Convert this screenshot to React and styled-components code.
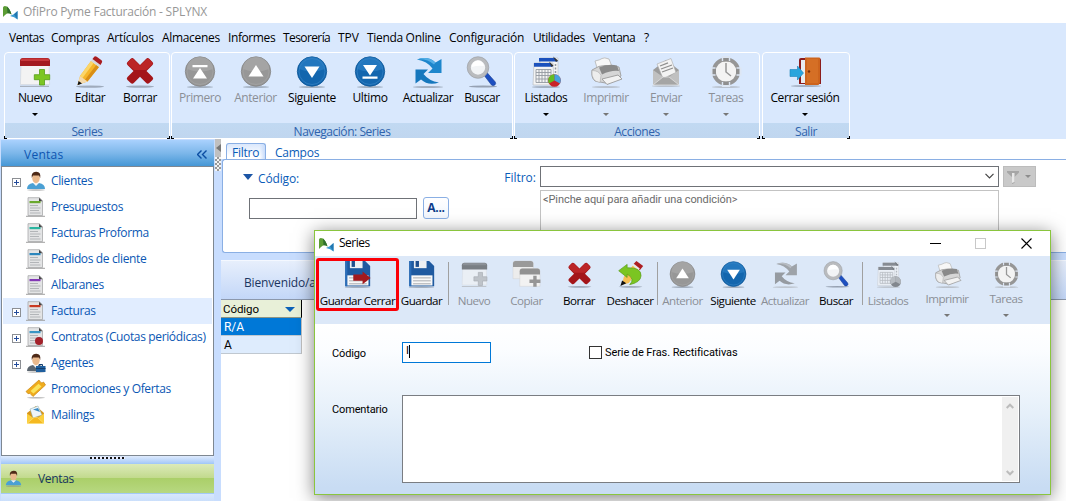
import React from "react";
import styled, { createGlobalStyle, css } from "styled-components";

const Global = createGlobalStyle`
  * { box-sizing: border-box; }
  html, body { margin: 0; padding: 0; overflow: hidden; }
  body { font: 12px/16px "Open Sans", "Noto Sans", sans-serif; letter-spacing: -0.32px; color: #000; background: #fff; }
`;

const Window = styled.div`
  position: relative; width: 1066px; height: 501px; overflow: hidden;
  display: flex; flex-direction: column; background: #fff;
`;
const TitleBar = styled.header`
  height: 23px; flex: none; display: flex; align-items: center; gap: 5px; padding-left: 2px;
  color: #979797; background: #fff; white-space: nowrap; letter-spacing: -0.22px;
  & > span { margin-top: 1px; }
`;
const MenuBar = styled.nav`
  height: 29px; flex: none; display: flex; align-items: center; padding: 1px 0 0 9px; background: #d9e8fd;
`;
const MenuItem = styled.span`width: ${p => p.$w}px; white-space: nowrap; letter-spacing: ${p => p.$ls}px;`;
const Ribbon = styled.div`height: 87px; flex: none; display: flex; padding-left: 4px; background: #d9e8fd;`;
const Group = styled.section`
  position: relative; width: ${p => p.$w}px; height: 87px; margin-right: ${p => p.$gap}px;
  display: flex; flex-direction: column; border: 1px solid #fff; border-radius: 4px 4px 0 0;
  &::before, &::after { content: ""; position: absolute; bottom: -1px; width: 2px; height: 2px; border-bottom: 1px solid #000; }
  &::before { left: -1px; border-left: 1px solid #000; }
  &::after { right: -1px; border-right: 1px solid #000; }
`;
const GroupButtons = styled.div`display: flex; flex: 1; padding-left: ${p => p.$pad || 0}px;`;
const GroupCaption = styled.div`
  height: 15px; background: linear-gradient(#c1d9f2, #c0d6ef); color: #2f63ad; text-align: center; line-height: 17px;
  letter-spacing: -0.45px;
`;
const ToolButton = styled.div`
  width: ${p => p.$w}px; flex: none; display: flex; flex-direction: column; align-items: center;
  color: ${p => (p.$off ? "#8b8f96" : "#000")}; padding-top: 3px; white-space: nowrap;
  & > span { margin-top: 2px; letter-spacing: -0.42px; }
`;
const Caret = styled.i`
  margin-top: 7px; border: 3px solid transparent; border-bottom: 0;
  border-top-color: ${p => (p.$off ? "#777" : "#000")}; width: 6px; height: 3px;
`;
const Art = styled.svg`
  width: ${p => p.$s || 32}px; height: ${p => p.$s || 32}px; display: block; flex: none; overflow: visible;
  ${p => p.$gray && css`filter: grayscale(1) opacity(0.6);`}
`;

const Body = styled.div`flex: 1; display: flex; min-height: 0;`;
const Sidebar = styled.aside`width: 215px; display: flex; flex-direction: column; padding: 1px 1px 0 1px; background: #c8ddfe;`;
const SideHeader = styled.div`
  height: 26px; flex: none; display: flex; align-items: center; justify-content: space-between; padding: 3px 7px 0 23px;
  background: linear-gradient(#a9d1fd, #7db7ea 50%, #4597d5); color: #0d55b1; letter-spacing: 0.25px;
`;
const Tree = styled.ul`
  list-style: none; margin: 0; padding: 1px 1px; height: 290px; flex: none; background: #fff; border: 1px solid #7e8791;
`;
const TreeRow = styled.li`
  height: 26px; display: flex; align-items: center; color: #0a57b4; white-space: nowrap;
  background: ${p => (p.$sel ? "#e1edff" : "#fff")};
  letter-spacing: -0.36px;
  & > svg { margin: 0 5px 0 5px; }
  & > span:last-child { margin-top: -1px; }
`;
const Expander = styled.span`
  width: 9px; height: 9px; flex: none; margin: 3px 0 0 9px; border: 1px solid ${p => (p.$on ? "#8c8f94" : "transparent")};
  background: ${p => p.$on ? "linear-gradient(#234b9b,#234b9b) center/5px 1px no-repeat, linear-gradient(#234b9b,#234b9b) center/1px 5px no-repeat, #fff" : "none"};
`;
const Grip = styled.div`
  height: 7px; flex: none; display: flex; justify-content: center; align-items: center;
  background: linear-gradient(#dfebfd, #a9cbf8);
  &::after { content: ""; width: 35px; height: 2px; margin-top: -3px; background: repeating-linear-gradient(90deg, #111 0 2px, #eef 2px 4px); }
`;
const NavButton = styled.div`
  height: ${p => p.$h}px; flex: none; display: flex; align-items: center; gap: 16px; padding-left: 4px; overflow: hidden;
  background: ${p => (p.$active ? "linear-gradient(#dceab9, #c2da8d 48%, #abcf69 50%, #b7d881)" : "linear-gradient(#d7e7fd,#c3dafb)")};
  color: #17365f; border-top: 1px solid #a3c9f7;
`;

const Splitter = styled.div`width: 6px; background: #c8ddfe;`;
const SplitHandle = styled.div`height: 18px; background: #c0c0c0; padding: 5px 0 0 1px;`;
const SplitDots = styled.div`
  height: 14px; background: repeating-conic-gradient(#999 0 25%, #f4f4f4 0 50%) 0 0/4px 4px;
`;
const Main = styled.main`flex: 1; display: flex; flex-direction: column; min-width: 0; background: #c8ddfe;`;
const Tabs = styled.div`height: 20px; flex: none; display: flex; align-items: flex-end; padding-left: 5px; background: #fff;`;
const Tab = styled.div`
  height: 16px; padding: 0 ${p => (p.$on ? 5 : 9)}px; color: #0a5cb8; letter-spacing: -0.25px;
  border: ${p => (p.$on ? "1px solid #8aafe4" : "0")}; border-bottom: 0; border-radius: 3px 3px 0 0; line-height: ${p => (p.$on ? 17 : 19)}px;
  width: ${p => p.$w}px;
  ${p => p.$on && css`background: linear-gradient(90deg, #fff0 85%, #c8dcfb), linear-gradient(#dbe8fc, #fff 80%);`}
`;
const FilterPanel = styled.div`
  height: 94px; flex: none; display: flex; background: #fff; border: 1px solid #8aafe4; border-right: 0; margin-left: 1px;
  border-radius: 3px 0 0 3px; padding-left: 20px; color: #0a5cb8;
`;
const FieldColumn = styled.div`width: 255px; display: flex; flex-direction: column;`;
const FieldTitle = styled.div`
  height: 16px; margin-top: 11px; display: flex; align-items: center; gap: 5px; letter-spacing: -0.15px;
  &::before { content: ""; border: 5.5px solid transparent; border-top: 6px solid #1c55a5; border-bottom: 0; margin-top: -4px; }
`;
const FieldRow = styled.div`display: flex; gap: 6px; margin: 10px 0 0 6px; align-items: center;`;
const Box = styled.div`
  width: ${p => p.$w}px; height: ${p => p.$h}px; background: #fff; border: 1px solid ${p => p.$c || "#6f7277"};
`;
const AlphaButton = styled.div`
  width: 26px; height: 22px; border: 1px solid #8aafe4; border-radius: 3px; text-align: center; font-weight: 700; color: #0d3b8a;
  line-height: 19px; background: linear-gradient(#fff, #f1f6fe);
`;
const FilterLabel = styled.div`width: 42px; padding: 10px 4px 0 0; text-align: right; letter-spacing: 0; white-space: nowrap;`;
const FilterColumn = styled.div`display: flex; flex-direction: column; gap: 3px; padding-top: 6px;`;
const Combo = styled(Box)`display: flex; align-items: center; justify-content: flex-end; padding-right: 4px;`;
const Small = styled.span`
  font: ${p => p.$size || 11}px/14px "Roboto", "Liberation Sans", sans-serif; letter-spacing: -0.08px;
  color: ${p => p.$c || "#000"}; white-space: nowrap;
`;
const Conditions = styled(Box)`padding: 0 2px;`;
const FunnelButton = styled.div`
  width: 33px; height: 21px; margin: 6px 0 0 4px; background: #c9c9c9; border: 1px solid #bcbcbc;
  display: flex; align-items: center; gap: 6px; padding-left: 3px;
`;
const Band = styled.div`
  height: 40px; flex: none; margin-top: 7px; background: linear-gradient(#e7effc, #c3d7f8); border-top: 1px solid #f4f8ff; border-bottom: 1px solid #8c98ac;
  padding: 14px 0 0 23px; color: #1c3560; letter-spacing: -0.15px;
`;
const Grid = styled.div`flex: 1; background: #fff;`;
const GridHead = styled.div`
  width: 81px; height: 18px; display: flex; align-items: center; justify-content: space-between; padding: 1px 6px 0 2px;
  background: #e8f0d8; border-right: 1px solid #000; border-bottom: 1px solid #8d9484;
  &::after { content: ""; border: 5px solid transparent; border-top: 5px solid #0c62b8; border-bottom: 0; }
`;
const GridRow = styled.div`
  width: 81px; height: 18px; padding: 1px 3px; display: flex; align-items: center;
  background: ${p => (p.$sel ? "#0078d7" : "#deecfd")}; border-right: 1px solid #c0c0c0; border-bottom: 1px solid #c0c8d0;
`;

const Dialog = styled.section`
  position: absolute; left: 314px; top: 230px; width: 737px; height: 265px; display: flex; flex-direction: column;
  border: 1px solid #8ac53e; background: #fff; box-shadow: 0 3px 17px rgba(0,0,0,.5);
`;
const DialogTitle = styled.div`
  height: 25px; flex: none; display: flex; align-items: center; padding-left: 3px;
  & > span { flex: 1; margin: -1px 0 0 5px; letter-spacing: -0.5px; }
`;
const WinButton = styled.svg`
  width: 11px; height: 11px; flex: none; margin-right: ${p => p.$mr}px; fill: none; shape-rendering: ${p => (p.$crisp ? "crispEdges" : "auto")};
`;
const DialogBar = styled.div`position: relative; height: 68px; flex: none; display: flex; background: #dce8f8;`;
const Divider = styled.div`width: 1px; height: 43px; margin: 6px 0 0 ${p => p.$ml}px; background: #a0a0a0; flex: none;`;
const DlgButton = styled(ToolButton)`
  padding-top: 5px;
  & > span { margin-top: ${p => (p.$menu ? 3 : 5)}px; letter-spacing: -0.5px; font-size: 11.6px; }
`;
const Highlight = styled.div`
  position: absolute; left: 1px; top: 2px; width: 83px; height: 53px; border: 3px solid #fb0007; border-radius: 3px;
`;
const Form = styled.div`
  flex: 1; min-height: 0; display: flex; flex-direction: column; padding: 18px 0 0 17px;
  background: linear-gradient(#fff 0%, #fbfdff 15%, #e6f0fa 52%, #c8dcf3 96%);
`;
const FormRow = styled.div`display: flex; align-items: center; height: 21px;`;
const MemoRow = styled.div`display: flex; align-items: flex-start; margin-top: 32px;`;
const FormLabel = styled(Small)`width: 70px; letter-spacing: -0.15px; ${p => p.$top ? css`margin-top: 8px;` : css`margin-top: 2px;`}`;
const CodeInput = styled.div`
  width: 89px; height: 21px; border: 1px solid #0078d7; background: #fff; padding: 1px 3px; display: flex;
  &::after { content: ""; width: 1px; height: 13px; margin-top: 1px; background: #000; }
`;
const Check = styled.div`width: 13px; height: 13px; border: 1px solid #333; background: #fff; margin: 0 3px 0 98px;`;
const Memo = styled.div`
  width: 618px; height: 88px; border: 1px solid #7a7d82; background: #fff; display: flex; justify-content: flex-end; padding: 1px;
`;
const Scroll = styled.div`
  width: 16px; background: #f0f0f0; display: flex; flex-direction: column; justify-content: space-between; align-items: center; padding: 6px 0 5px;
`;

const Shade = () => <ellipse cx="16" cy="30.6" rx="14" ry="1.1" fill="#7f8a99" opacity=".65" />;

const art = {
  nuevo: (
    <>
      <path d="M1 29.8h29v1H1z" fill="#9ba3ad" />
      <path d="M2 9h28l.6 19.5H1.4z" fill="#f3f3f3" stroke="#d0d3d8" strokeWidth=".6" />
      <path d="M1 5q0-3 3-3h24q3 0 3 3v5H1z" fill="#a31a1e" />
      <path d="M2 4q0-1.5 2-1.5h24q2 0 2 1.5v1H2z" fill="#c7373a" />
      <path d="M20.500 13.500h5v5.200h5.200v5h-5.200V29h-5v-5.300h-5.200v-5h5.200z" fill="#7cc623" stroke="#569d16" strokeWidth=".8" />
    </>
  ),
  editar: (
    <>
      <Shade />
      <path d="M3.500 29l2.500-9L17 5l8 6L13.500 25.500z" fill="#f5b52a" />
      <path d="M17 5l2.700 2L8.500 22 6 20z" fill="#fbd568" /><path d="M22.300 9l2.700 2-11.500 14.500-2.600-1.800z" fill="#d98e16" />
      <path d="M6 20l7.500 5.500L3.500 29z" fill="#f2d9ae" /><path d="M4.600 25l3.400 2.400-4.500 1.800z" fill="#111" />
      <path d="M17 5l1.500-2 8 6-1.500 2z" fill="#d6d8da" /><path d="M18.500 3l1.700-2.300q1-1 2.500 0l4.800 3.600q1.200 1 .4 2.200L26.500 9z" fill="#a81c20" />
    </>
  ),
  borrar: (
    <>
      <Shade />
      <path d="M7 2.500q1.500-1 3 .5l6 6 6-6q1.500-1.500 3-.5l3.500 3.500q1.500 1.500 0 3L22.500 15l6 6q1.500 1.500 0 3L25 27.300q-1.500 1-3-.5l-6-6-6 6q-1.500 1.500-3 .5L3.500 24q-1.500-1.500 0-3l6-6-6-6q-1.500-1.500 0-3z" fill="#a41519" />
      <path d="M7 3.200q1.500-1 3 .5l6 6 6-6q1.500-1.500 3-.5l3 3q1 1.500 0 2.500L22 14H10L4 8.500q-1-1.500 0-2.500z" fill="#bb2527" />
    </>
  ),
  arrow: kind => gray => (
    <>
      <ellipse cx="16" cy="31" rx="13" ry="1" fill="#7f8a99" opacity=".6" />
      <circle cx="16" cy="15.500" r="14.700" fill={gray ? "#979797" : "#1366ae"} stroke={gray ? "#858585" : "#0d5595"} strokeWidth=".8" />
      <path d="M3 13a13 12 0 0 1 26 0q-13 5-26 0z" fill={gray ? "#a9a9a9" : "#2b7fc4"} opacity=".7" />
      <circle cx="16" cy="15.500" r="13" fill="none" stroke={gray ? "#a5a5a5" : "#3583c4"} strokeWidth=".7" />
      {kind === "down" && <path d="M8.500 10.500h15L16 22z" fill="#fff" />}
      {kind === "up" && <path d="M8.500 20.500h15L16 9z" fill="#fff" />}
      {kind === "first" && <path d="M8.500 9h15v2.300h-15zM9 22.500h14L16 12z" fill="#fff" />}
      {kind === "last" && <path d="M8.500 20.500h15v2.300h-15zM9 9h14l-7 10.500z" fill="#fff" />}
    </>
  ),
  actualizar: (
    <>
      <ellipse cx="16" cy="31" rx="15" ry="1" fill="#7f8a99" opacity=".6" />
      <path d="M5 3.500Q16-.5 23.500 6.500L29.500 3v14H16l4.500-4.500Q15 5 5 3.500z" fill="#1d86cc" />
      <path d="M27 26.500Q16 30 9 23.500L3.500 27.500V13.500H16l-4.500 4.500Q17 25 27 26.500z" fill="#1577bd" />
      <path d="M5 3.500Q16-.5 23.500 6.500l-1.500 2Q15 2.500 5 3.500z" fill="#54aee6" />
    </>
  ),
  buscar: (
    <>
      <ellipse cx="17" cy="30.500" rx="14" ry="1" fill="#7f8a99" opacity=".75" />
      <path d="M17.500 18.500l3-2.500 8.800 10q1 1.800-.5 3t-3.300 0z" fill="#1d4fc0" stroke="#153a92" strokeWidth=".6" />
      <circle cx="12" cy="11.500" r="9" fill="#f2f4f6" stroke="#b9bbbe" strokeWidth="3.600" />
      <circle cx="12" cy="11.500" r="10.800" fill="none" stroke="#96999e" strokeWidth=".6" />
      <path d="M6 11a6 6 0 0 1 12-1q-6-1-12 1z" fill="#fff" />
    </>
  ),
  listados: (
    <>
      <ellipse cx="16" cy="31" rx="14" ry="1" fill="#7f8a99" opacity=".6" />
      <path d="M10 2h18v25H10z" fill="#f5f5f5" stroke="#b9bcc0" strokeWidth=".6" /><path d="M9 2h16l3 3.500H9z" fill="#1b51bd" />
      <path d="M23 .5l5 4-2 1.500z" fill="#333" /><path d="M25.500 8v10" stroke="#949aa2" strokeWidth="1.500" strokeDasharray="2 1.500" />
      <path d="M4 7h19l1 22H3z" fill="#f4f4f4" stroke="#b4b7bb" strokeWidth=".6" /><path d="M4 7h16l3 3.800H4z" fill="#1b51bd" /><path d="M19 5.500l4.500 4-2 1.500z" fill="#333" />
      <path d="M6 13.500h15v13H6zM6 16.500h15M6 19.500h15M6 23h15M9 13.500v13M12 13.500v13M15 13.500v13M18 13.500v13" stroke="#949aa2" strokeWidth=".9" fill="none" />
      <circle cx="24.500" cy="24.500" r="6.300" fill="#c92328" /><path d="M24.500 24.500V18.200A6.300 6.300 0 0 0 19 27.500z" fill="#62bd22" /><path d="M24.500 24.500V18.200A6.300 6.300 0 0 1 30 27.500z" fill="#45a2dc" />
    </>
  ),
  imprimir: (
    <>
      <ellipse cx="16" cy="31" rx="14" ry="1" fill="#8a8a8a" opacity=".4" />
      <path d="M5 5q5-1 7-2.500t7 .5l4 10-15 2z" fill="#f7f7f7" stroke="#b4b4b4" strokeWidth=".8" />
      <path d="M2 14q7-5 14-4.500T29 11l2 9q-5 5-13 7.500L5 25q-4-3-3-11z" fill="#d6d6d6" stroke="#9c9c9c" strokeWidth=".9" />
      <path d="M9 11.500q9-4 18-2l2 5.500q-8-1-17 3.500z" fill="#8a8a8a" />
      <path d="M2 14.500q7 0 9 5l-1 7q-9-1-8-12z" fill="#ededed" stroke="#aaa" strokeWidth=".6" />
      <path d="M12 23l16-4 4 4-15 5.500z" fill="#f2f2f2" stroke="#9a9a9a" strokeWidth=".9" />
    </>
  ),
  enviar: (
    <>
      <ellipse cx="16" cy="30" rx="14" ry="1" fill="#8a8a8a" opacity=".4" />
      <path d="M3 14L16 4l13 10v15H3z" fill="#9c9c9c" />
      <path d="M7 8l14-5.500 5 14-13 6z" fill="#f3f3f3" stroke="#a8a8a8" strokeWidth=".6" /><path d="M10 10l8-3.200M11 13l11-4M12 16l11-4" stroke="#8f8f8f" strokeWidth="1.300" />
      <path d="M3 14l13 9 13-9v15H3z" fill="#c0c0c0" /><path d="M3 29l10-8h6l10 8z" fill="#a5a5a5" stroke="#e5e5e5" strokeWidth=".7" />
    </>
  ),
  tareas: (
    <>
      <ellipse cx="16" cy="31" rx="14" ry="1" fill="#8a8a8a" opacity=".4" />
      <circle cx="16" cy="15.500" r="12.200" fill="#f3f3f3" stroke="#969696" strokeWidth="3.800" />
      <path d="M11.800 0h8.400v5h-8.400zM11.800 26h8.400v5h-8.400zM.5 11.300v8.400h5v-8.400zM26.500 11.300v8.400h5v-8.400z" fill="#dde6f3" />
      <path d="M13.200 2h5.600v3.500h-5.600zM13.200 25.500h5.600V29h-5.600zM2.500 12.700H6v5.600H2.500zM26 12.700h3.500v5.600H26z" fill="#8f8f8f" />
      <path d="M16 7v9l5 4" stroke="#979797" strokeWidth="1.500" fill="none" />
    </>
  ),
  cerrar: (
    <>
      <ellipse cx="17" cy="30" rx="15" ry="1" fill="#7f8a99" opacity=".6" />
      <path d="M10 4q0-2 2-2h18q2 0 2 2v24H10z" fill="#8b1c1c" /><path d="M12 4h4v23h-4z" fill="#e8ecf0" />
      <path d="M16 1.500h14.500Q31 1.500 31 3V27l-1.500 2H16z" fill="#cd641d" /><path d="M18 3h11v24H18z" fill="#d9732a" opacity=".7" />
      <circle cx="20" cy="15.500" r="1.200" fill="#7a300a" />
      <path d="M1 13.500h7.500V10l6 7-6 7v-3.500H1z" fill="#2aa5dd" stroke="#1b83b8" strokeWidth=".6" />
    </>
  ),
  guardar: (
    <>
      <ellipse cx="16" cy="31" rx="15" ry="1" fill="#7f8a99" opacity=".6" />
      <path d="M1.500 0H25l6 6v24H1.500z" fill="#1f5aa0" /><path d="M1.500 0H4v30H1.500z" fill="#2b6db8" />
      <path d="M7 0h15v8.500H7z" fill="#eceff3" /><path d="M9 0h4v7H9z" fill="#1e4f8f" />
      <path d="M4 17h25v12H4z" fill="#f8f8f8" /><path d="M6 20h21M6 23.500h21M6 27h21" stroke="#9a9ea3" strokeWidth="1" />
    </>
  ),
  flecha: <path d="M11 16h11v-3.500l9.500 7.500-9.500 7.500V23.500H11z" fill="#a3191d" />,
  copiar: (
    <>
      <path d="M0 3q0-3 3-3h18q3 0 3 3v18H0z" fill="#ececec" stroke="#ccc" strokeWidth=".5" /><path d="M0 3q0-3 3-3h18q3 0 3 3v4H0z" fill="#9a9a9a" />
      <path d="M8 12q0-3 3-3h18q3 0 3 3v18H8z" fill="#f2f2f2" stroke="#ccc" strokeWidth=".5" /><path d="M8 12q0-3 3-3h18q3 0 3 3v4H8z" fill="#929292" />
      <path d="M24 17.500h4V22h4.500v4H28v4.500h-4V26h-4.500v-4H24z" fill="#969696" />
    </>
  ),
  deshacer: (
    <>
      <Shade />
      <path d="M6 28l2-9L19 5l7 5L14 26z" fill="#f6bf55" /><path d="M19 4l4-4 8 6-4 5z" fill="#ad1d21" /><path d="M18 5l1.500-2 7.500 6-1.500 2z" fill="#e8e8e8" />
      <path d="M4 29.500L6 23l5 3.500z" fill="#111" />
      <path d="M2 11.500L12 4v4q17-.5 16.500 9.500-.5 8-13.500 10.500Q22 21.500 12 15.500v4z" fill="#7bc522" stroke="#579a17" strokeWidth=".8" />
    </>
  ),
};
const Logo = () => (
  <Art $s={16} viewBox="0 0 16 16">
    <path d="M1 13V3.500Q1.500 1 5 2.500Q8 5 9.500 10.500Q7 8.500 5 9.500T1 13z" fill="#5b9c34" />
    <path d="M5 2.500Q8 5 9.500 10.500Q7.500 8.800 5.500 9.300z" fill="#2f6f2c" />
    <path d="M8 12Q12 11 15.500 7V15.500Q12.500 12.500 8 12z" fill="#3a9bd2" /><path d="M12 10.300L15.500 7V15.500z" fill="#2277b0" />
  </Art>
);
const GRAYED = ["nuevo", "listados", "actualizar"];
const Icon = ({ name, off, s }) => {
  if (name.startsWith("go-")) return <Art $s={s} viewBox="0 0 32 32">{art.arrow(name.slice(3))(off)}</Art>;
  if (name === "guardarcerrar") return <Art $s={s} viewBox="0 0 32 32">{art.guardar}{art.flecha}</Art>;
  return <Art $s={s} $gray={off && GRAYED.includes(name)} viewBox="0 0 32 32">{art[name]}</Art>;
};

const Person = ({ s = 20, agent }) => (
  <Art $s={s} viewBox="0 0 20 20">
    <ellipse cx="10" cy="19" rx="9" ry=".8" fill="#888" opacity=".6" />
    <path d="M1 18q0-5 6-6h6q6 1 6 6z" fill={agent ? "#5c6670" : "#4aa0d4"} /><path d="M7 12l3 3 3-3z" fill="#f4f4f4" />
    <ellipse cx="10" cy="7.200" rx="3.700" ry="5" fill="#eab98c" />
    <path d="M5.800 7Q4.800 1 10 .8T14.200 7L13 4.500H7z" fill="#4e2a17" />
    {agent && <><path d="M10 13h9.500v6H10z" fill="#1f5f9e" /><path d="M13 13v-1.500h3.500V13M10 15.500h9.500" stroke="#123f70" fill="none" /></>}
  </Art>
);
const Doc = ({ c, seal }) => (
  <Art $s={20} viewBox="0 0 20 20">
    <path d="M0 18.800h19v1H0z" fill="#a0a0a0" />
    <path d="M2 .7h11.500l3 3V18.500H2z" fill="#e3e4e5" stroke="#9d9fa1" strokeWidth=".7" /><path d="M13 .7l3.500 3.500H13z" fill="#444" />
    <path d="M3.500 4h11v2.200h-11z" fill={c} /><path d="M4 8.500h8M4 11h10.500M4 13.500h9M4 16h10.500" stroke="#b2b5b8" strokeWidth="1" />
    {seal && <circle cx="13" cy="14" r="4" fill="#a3212a" />}
  </Art>
);
const Ticket = () => (
  <Art $s={20} viewBox="0 0 20 20">
    <ellipse cx="10" cy="18.800" rx="9" ry=".8" fill="#888" opacity=".6" />
    <path d="M0 12.500L13 1l1.500 2.200q1.500 1.500 3-.2L19.500 6 7 17.500l-2-2q-.5-2-3-.8z" fill="#f0ac1c" stroke="#c98612" strokeWidth=".7" /><path d="M4.500 12L12.500 4.800l3 2.800-8 7z" fill="#fbe45c" />
  </Art>
);
const Mail = () => (
  <Art $s={20} viewBox="0 0 20 20">
    <path d="M1 8l9-7 8 7v10H1z" fill="#d7951c" /><path d="M4 4l8-3 4 9-9 3z" fill="#eef5fb" stroke="#8aa" strokeWidth=".5" /><path d="M7 4.500l5-1.500 2 4z" fill="#3b8bc4" />
    <path d="M1 8.500l8.500 6L18 8.500V18.500H1z" fill="#fbcf3e" /><path d="M1 18.500l7-6h3.500l6.500 6z" fill="#f5b921" stroke="#fde58a" strokeWidth=".6" />
  </Art>
);

const menus = [["Ventas", 42, -0.5], ["Compras", 56], ["Artículos", 55, -0.25], ["Almacenes", 66], ["Informes", 55, -0.4], ["Tesorería", 55, -0.6], ["TPV", 29, -0.1], ["Tienda Online", 82], ["Configuración", 84, -0.22], ["Utilidades", 60, -0.4], ["Ventana", 51, -0.6], ["?", 10]];

const groups = [
  { title: "Series", w: 166, gap: 1, pad: 0, items: [["Nuevo", "nuevo", 60, 0, 1], ["Editar", "editar", 50], ["Borrar", "borrar", 50]] },
  { title: "Navegación: Series", w: 342, gap: 1, pad: 0, items: [["Primero", "go-first", 56, 1], ["Anterior", "go-up", 55, 1], ["Siguiente", "go-down", 58], ["Ultimo", "go-last", 58], ["Actualizar", "actualizar", 58], ["Buscar", "buscar", 50]] },
  { title: "Acciones", w: 246, gap: 2, pad: 1, items: [["Listados", "listados", 60, 0, 1], ["Imprimir", "imprimir", 60, 1, 1], ["Enviar", "enviar", 60, 1, 1], ["Tareas", "tareas", 60, 1, 1]] },
  { title: "Salir", w: 88, gap: 0, pad: 1, items: [["Cerrar sesión", "cerrar", 82, 0, 1]] },
];

const tree = [
  ["Clientes", <Person key="i" />, 1], ["Presupuestos", <Doc key="i" c="#6aa92e" />], ["Facturas Proforma", <Doc key="i" c="#2bb5a0" />],
  ["Pedidos de cliente", <Doc key="i" c="#2b86bd" />], ["Albaranes", <Doc key="i" c="#8338b5" />], ["Facturas", <Doc key="i" c="#c93a22" />, 1],
  ["Contratos (Cuotas periódicas)", <Doc key="i" c="#3a96c4" seal />, 1], ["Agentes", <Person key="i" agent />, 1],
  ["Promociones y Ofertas", <Ticket key="i" />], ["Mailings", <Mail key="i" />],
];

const dialogTools = [
  { t: "Guardar Cerrar", n: "guardarcerrar", w: 85 }, { t: "Guardar", n: "guardar", w: 43 },
  { t: "Nuevo", n: "nuevo", w: 50, off: 1, div: 5 }, { t: "Copiar", n: "copiar", w: 55, off: 1 }, { t: "Borrar", n: "borrar", w: 50 }, { t: "Deshacer", n: "deshacer", w: 52 },
  { t: "Anterior", n: "go-up", w: 49, off: 1, div: 1 }, { t: "Siguiente", n: "go-down", w: 52 }, { t: "Actualizar", n: "actualizar", w: 52, off: 1 }, { t: "Buscar", n: "buscar", w: 50 },
  { t: "Listados", n: "listados", w: 50, off: 1, div: 1 }, { t: "Imprimir", n: "imprimir", w: 68, off: 1, menu: 1 }, { t: "Tareas", n: "tareas", w: 50, off: 1, menu: 1 },
];

export default function App() {
  return (
    <Window>
      <Global />
      <TitleBar><Logo /><span>OfiPro Pyme Facturación - SPLYNX</span></TitleBar>
      <MenuBar>{menus.map(([t, w, ls = -0.32]) => <MenuItem key={t} $w={w} $ls={ls}>{t}</MenuItem>)}</MenuBar>
      <Ribbon>
        {groups.map(g => (
          <Group key={g.title} $w={g.w} $gap={g.gap}>
            <GroupButtons $pad={g.pad}>
              {g.items.map(([t, n, w, off, menu]) => (
                <ToolButton key={t} $w={w} $off={off}>
                  <Icon name={n} off={off} /><span>{t}</span>{menu ? <Caret $off={off} /> : null}
                </ToolButton>
              ))}
            </GroupButtons>
            <GroupCaption>{g.title}</GroupCaption>
          </Group>
        ))}
      </Ribbon>
      <Body>
        <Sidebar>
          <SideHeader>
            <span>Ventas</span>
            <svg width="10" height="9" viewBox="0 0 10 9" fill="none" stroke="#0b4da2" strokeWidth="1.4"><path d="M4.500.5l-4 4 4 4M9.500.5l-4 4 4 4" /></svg>
          </SideHeader>
          <Tree>
            {tree.map(([t, icon, exp]) => (
              <TreeRow key={t} $sel={t === "Facturas"}><Expander $on={exp} />{icon}<span>{t}</span></TreeRow>
            ))}
          </Tree>
          <Grip />
          <NavButton $h={30} $active><Person s={17} /><span>Ventas</span></NavButton>
          <NavButton $h={12} />
        </Sidebar>
        <Splitter>
          <SplitHandle><svg width="5" height="8" viewBox="0 0 5 8" display="block"><path d="M5 0v8L0 4z" fill="#777" /></svg></SplitHandle>
          <SplitDots />
        </Splitter>
        <Main>
          <Tabs><Tab $on $w={40}>Filtro</Tab><Tab $w={80}>Campos</Tab></Tabs>
          <FilterPanel>
            <FieldColumn>
              <FieldTitle>Código:</FieldTitle>
              <FieldRow><Box $w={168} $h={21} /><AlphaButton>A...</AlphaButton></FieldRow>
            </FieldColumn>
            <FilterLabel>Filtro:</FilterLabel>
            <FilterColumn>
              <Combo $w={459} $h={21}><svg width="9" height="6" viewBox="0 0 9 6" fill="none" stroke="#444" strokeWidth="1.2"><path d="M.5.8l4 4 4-4" /></svg></Combo>
              <Conditions $w={459} $h={63} $c="#c3c3c3"><Small $c="#6b6b6b">&lt;Pinche aquí para añadir una condición&gt;</Small></Conditions>
            </FilterColumn>
            <FunnelButton>
              <svg width="12" height="14" viewBox="0 0 12 14"><path d="M0 1h12v1.500L7.500 7v6L5 14V7L0 2.500z" fill="#a6a6a6" /><path d="M5 3h2.500v9L5 13z" fill="#e8e8e8" /></svg>
              <svg width="6" height="3" viewBox="0 0 6 3"><path d="M0 0h6L3 3z" fill="#8d8d8d" /></svg>
            </FunnelButton>
          </FilterPanel>
          <Band>Bienvenido/a</Band>
          <Grid>
            <GridHead><Small $size={11.5}>Código</Small></GridHead>
            <GridRow $sel><Small $size={12} $c="#fff">R/A</Small></GridRow>
            <GridRow><Small $size={12}>A</Small></GridRow>
          </Grid>
        </Main>
      </Body>

      <Dialog>
        <DialogTitle>
          <Logo /><span>Series</span>
          <WinButton $mr={34} $crisp viewBox="0 0 11 11"><path d="M0 5.500h11" stroke="#000" /></WinButton>
          <WinButton $mr={35} $crisp viewBox="0 0 11 11"><path d="M.5.500h10v10H.5z" stroke="#c8c8c8" /></WinButton>
          <WinButton $mr={18} viewBox="0 0 11 11"><path d="M.5.500l10 10M10.500.500l-10 10" stroke="#000" strokeWidth="1.100" /></WinButton>
        </DialogTitle>
        <DialogBar>
          {dialogTools.map(({ t, n, w, off, menu, div }) => (
            <React.Fragment key={t}>
              {div ? <Divider $ml={div} /> : null}
              <DlgButton $w={w} $off={off} $menu={menu}>
                <Icon name={n} off={off} s={27} /><span>{t}</span>{menu ? <Caret $off={off} /> : null}
              </DlgButton>
            </React.Fragment>
          ))}
          <Highlight />
        </DialogBar>
        <Form>
          <FormRow>
            <FormLabel>Código</FormLabel>
            <CodeInput><Small>I</Small></CodeInput>
            <Check /><Small>Serie de Fras. Rectificativas</Small>
          </FormRow>
          <MemoRow>
            <FormLabel $top>Comentario</FormLabel>
            <Memo>
              <Scroll>
                <svg width="8" height="6" viewBox="0 0 8 6" fill="none" stroke="#bcbcbc" strokeWidth="2"><path d="M.7 5L4 1.700 7.300 5" /></svg>
                <svg width="8" height="6" viewBox="0 0 8 6" fill="none" stroke="#bcbcbc" strokeWidth="2"><path d="M.7 1L4 4.300 7.300 1" /></svg>
              </Scroll>
            </Memo>
          </MemoRow>
        </Form>
      </Dialog>
    </Window>
  );
}
